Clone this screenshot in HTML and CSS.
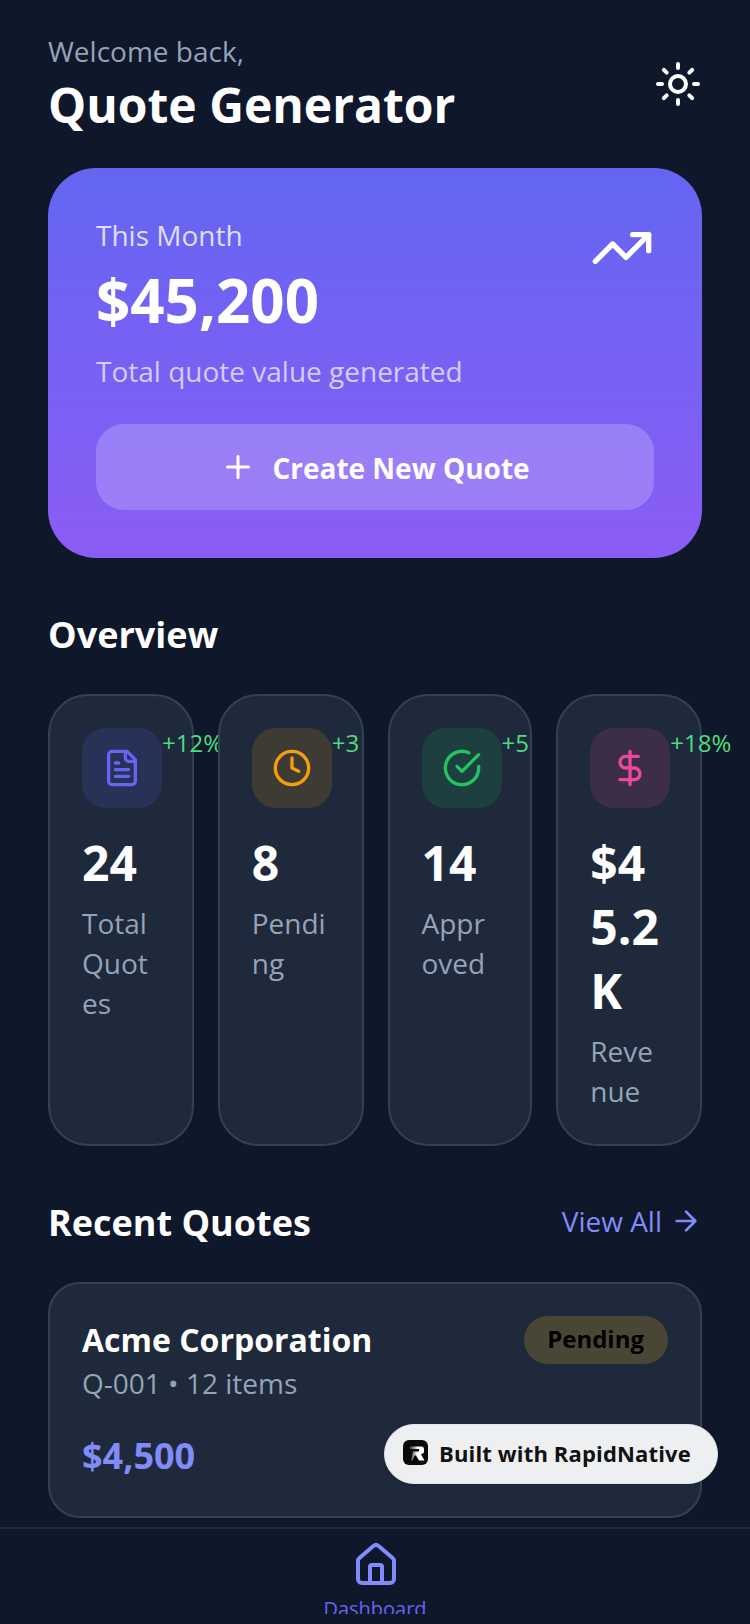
FILE: index.html
```html
<!DOCTYPE html>
<html lang="en">
<head>
    <meta charset="UTF-8">
    <title>Quote Generator</title>
    <link rel="stylesheet" href="styles.css">
</head>
<body>
    <div class="app">
        <main class="content">
            <header class="header">
                <div>
                    <p class="welcome">Welcome back,</p>
                    <h1 class="app-title">Quote Generator</h1>
                </div>
                <svg class="icon-48" viewBox="0 0 24 24" fill="none" stroke="#fff" stroke-width="2" stroke-linecap="round" stroke-linejoin="round">
                    <circle cx="12" cy="12" r="4"/>
                    <path d="M12 2v2M12 20v2M4.93 4.93l1.41 1.41M17.66 17.66l1.41 1.41M2 12h2M20 12h2M6.34 17.66l-1.41 1.41M19.07 4.93l-1.41 1.41"/>
                </svg>
            </header>

            <section class="hero">
                <div class="hero-top">
                    <div>
                        <p class="hero-label">This Month</p>
                        <p class="hero-value">$45,200</p>
                        <p class="hero-note">Total quote value generated</p>
                    </div>
                    <svg class="icon-64" viewBox="0 0 24 24" fill="none" stroke="#fff" stroke-width="2" stroke-linecap="round" stroke-linejoin="round">
                        <polyline points="22 7 13.5 15.5 8.5 10.5 2 17"/>
                        <polyline points="16 7 22 7 22 13"/>
                    </svg>
                </div>
                <button class="create-button">
                    <svg class="icon-36" viewBox="0 0 24 24" fill="none" stroke="#fff" stroke-width="2" stroke-linecap="round" stroke-linejoin="round">
                        <path d="M5 12h14M12 5v14"/>
                    </svg>
                    <span class="create-text">Create New Quote</span>
                </button>
            </section>

            <h2 class="section-title overview-title">Overview</h2>
            <section class="stats">
                <div class="stat-card">
                    <div class="stat-top">
                        <div class="stat-icon tint-indigo">
                            <svg class="icon-40" viewBox="0 0 24 24" fill="none" stroke="#6366f1" stroke-width="2" stroke-linecap="round" stroke-linejoin="round">
                                <path d="M15 2H6a2 2 0 0 0-2 2v16a2 2 0 0 0 2 2h12a2 2 0 0 0 2-2V7Z"/>
                                <path d="M14 2v4a2 2 0 0 0 2 2h4"/>
                                <path d="M10 9H8M16 13H8M16 17H8"/>
                            </svg>
                        </div>
                        <span class="stat-change">+12%</span>
                    </div>
                    <p class="stat-value">24</p>
                    <p class="stat-label">Total Quotes</p>
                </div>
                <div class="stat-card">
                    <div class="stat-top">
                        <div class="stat-icon tint-amber">
                            <svg class="icon-40" viewBox="0 0 24 24" fill="none" stroke="#f59e0b" stroke-width="2" stroke-linecap="round" stroke-linejoin="round">
                                <circle cx="12" cy="12" r="10"/>
                                <polyline points="12 6 12 12 16 14"/>
                            </svg>
                        </div>
                        <span class="stat-change">+3</span>
                    </div>
                    <p class="stat-value">8</p>
                    <p class="stat-label">Pending</p>
                </div>
                <div class="stat-card">
                    <div class="stat-top">
                        <div class="stat-icon tint-green">
                            <svg class="icon-40" viewBox="0 0 24 24" fill="none" stroke="#22c55e" stroke-width="2" stroke-linecap="round" stroke-linejoin="round">
                                <path d="M22 11.08V12a10 10 0 1 1-5.93-9.14"/>
                                <path d="m9 11 3 3L22 4"/>
                            </svg>
                        </div>
                        <span class="stat-change">+5</span>
                    </div>
                    <p class="stat-value">14</p>
                    <p class="stat-label">Approved</p>
                </div>
                <div class="stat-card">
                    <div class="stat-top">
                        <div class="stat-icon tint-pink">
                            <svg class="icon-40" viewBox="0 0 24 24" fill="none" stroke="#ec4899" stroke-width="2" stroke-linecap="round" stroke-linejoin="round">
                                <path d="M12 2v20"/>
                                <path d="M17 5H9.5a3.5 3.5 0 0 0 0 7h5a3.5 3.5 0 0 1 0 7H6"/>
                            </svg>
                        </div>
                        <span class="stat-change">+18%</span>
                    </div>
                    <p class="stat-value">$45.2K</p>
                    <p class="stat-label">Revenue</p>
                </div>
            </section>

            <div class="section-row">
                <h2 class="section-title">Recent Quotes</h2>
                <a class="view-all">
                    <span>View All</span>
                    <svg class="icon-32" viewBox="0 0 24 24" fill="none" stroke="#818cf8" stroke-width="2" stroke-linecap="round" stroke-linejoin="round">
                        <path d="M5 12h14M12 5l7 7-7 7"/>
                    </svg>
                </a>
            </div>

            <article class="quote-card">
                <div class="quote-top">
                    <div>
                        <p class="quote-name">Acme Corporation</p>
                        <p class="quote-meta">Q-001 • 12 items</p>
                    </div>
                    <span class="quote-status">Pending</span>
                </div>
                <p class="quote-amount">$4,500</p>
            </article>
        </main>

        <nav class="tabbar">
            <svg class="icon-48 tab-icon" viewBox="0 0 24 24" fill="none" stroke="#818cf8" stroke-width="2" stroke-linecap="round" stroke-linejoin="round">
                <path d="M15 21v-8a1 1 0 0 0-1-1h-4a1 1 0 0 0-1 1v8"/>
                <path d="M3 10a2 2 0 0 1 .709-1.528l7-5.999a2 2 0 0 1 2.582 0l7 5.999A2 2 0 0 1 21 10v9a2 2 0 0 1-2 2H5a2 2 0 0 1-2-2z"/>
            </svg>
            <span class="tab-label">Dashboard</span>
        </nav>

        <div class="built-badge">
            <svg class="built-logo" viewBox="0 0 25 25">
                <defs>
                    <linearGradient id="logoFade" x1="0" y1="0" x2="1" y2="0">
                        <stop offset="0.1" stop-color="#555"/>
                        <stop offset="0.5" stop-color="#fff"/>
                    </linearGradient>
                </defs>
                <rect width="25" height="25" rx="6" fill="#0a0a0a"/>
                <path d="M7 6.5h11.5a2.5 2.5 0 0 1 2.5 2.5v3.5l-3 2 3.5 6h-5.5l-3-5h-1.5l-2 5H8l2-9h6v-2.5H7z" fill="url(#logoFade)"/>
            </svg>
            <span>Built with RapidNative</span>
        </div>
    </div>
</body>
</html>
```

FILE: styles.css
```css
* {
    box-sizing: border-box;
}

html, body {
    margin: 0;
    padding: 0;
}

body {
    font-family: "Open Sans", Arial, sans-serif;
    background-color: #0f172a;
    color: #fff;
}

p, h1, h2 {
    margin: 0;
}

svg {
    display: block;
    flex-shrink: 0;
}

.icon-32 { width: 32px; height: 32px; }
.icon-36 { width: 36px; height: 36px; }
.icon-40 { width: 40px; height: 40px; }
.icon-48 { width: 48px; height: 48px; }
.icon-64 { width: 64px; height: 64px; }

.app {
    position: relative;
    width: 750px;
    height: 1624px;
    display: flex;
    flex-direction: column;
    overflow: hidden;
}

.content {
    flex: 1;
    min-height: 0;
    overflow: hidden;
    padding: 33px 48px 0;
}

/* header */
.header {
    display: flex;
    justify-content: space-between;
    align-items: center;
    margin-bottom: 34px;
}

.welcome {
    font-size: 28px;
    line-height: 36px;
    color: #94a3b8;
}

.app-title {
    font-size: 48px;
    line-height: 58px;
    font-weight: 700;
    margin-top: 7px;
}

/* hero card */
.hero {
    padding: 48px;
    border-radius: 48px;
    background: linear-gradient(180deg, #6366f1, #8b5cf6);
}

.hero-top {
    display: flex;
    justify-content: space-between;
    align-items: flex-start;
}

.hero-label {
    font-size: 28px;
    line-height: 38px;
    color: rgba(255, 255, 255, 0.8);
}

.hero-value {
    font-size: 60px;
    line-height: 80px;
    font-weight: 700;
    margin-top: 6px;
}

.hero-note {
    font-size: 28px;
    line-height: 40px;
    color: rgba(255, 255, 255, 0.7);
    margin-top: 11px;
}

.create-button {
    width: 100%;
    height: 86px;
    margin-top: 33px;
    display: flex;
    align-items: center;
    justify-content: center;
    gap: 16px;
    border: none;
    border-radius: 28px;
    background-color: rgba(255, 255, 255, 0.2);
    color: #fff;
    font-family: inherit;
    font-size: 28px;
    font-weight: 700;
}

.create-text {
    padding-top: 2px;
}

/* sections */
.section-title {
    font-size: 36px;
    line-height: 48px;
    font-weight: 700;
}

.overview-title {
    margin-top: 53px;
}

.stats {
    display: grid;
    grid-template-columns: 145.75fr 145.75fr 144.75fr 145.75fr;
    gap: 24px;
    margin-top: 35px;
}

.stat-card {
    min-width: 0;
    padding: 32px 32px 33px;
    border: 2px solid #334155;
    border-radius: 40px;
    background-color: #1e293b;
}

.stat-top {
    display: flex;
    justify-content: space-between;
    align-items: flex-start;
    margin-bottom: 23px;
}

.stat-icon {
    width: 80px;
    height: 80px;
    flex-shrink: 0;
    display: flex;
    align-items: center;
    justify-content: center;
    border-radius: 24px;
}

.tint-indigo { background-color: rgba(99, 102, 241, 0.15); }
.tint-amber { background-color: rgba(245, 158, 11, 0.15); }
.tint-green { background-color: rgba(34, 197, 94, 0.15); }
.tint-pink { background-color: rgba(236, 72, 153, 0.15); }

.stat-change {
    font-size: 24px;
    line-height: 30px;
    color: #4ade80;
}

.stat-value {
    font-size: 48px;
    line-height: 64px;
    font-weight: 700;
    overflow-wrap: anywhere;
    margin-bottom: 8px;
}

.stat-label {
    font-size: 28px;
    line-height: 40px;
    color: #94a3b8;
    overflow-wrap: anywhere;
}

.section-row {
    display: flex;
    justify-content: space-between;
    align-items: center;
    margin-top: 53px;
}

.view-all {
    display: flex;
    align-items: center;
    gap: 8px;
    padding-bottom: 4px;
    font-size: 28px;
    line-height: 40px;
    color: #818cf8;
}

/* quote card */
.quote-card {
    margin-top: 35px;
    padding: 32px 32px 36px;
    border: 2px solid #334155;
    border-radius: 32px;
    background-color: #1e293b;
}

.quote-top {
    display: flex;
    justify-content: space-between;
    align-items: flex-start;
}

.quote-name {
    font-size: 32px;
    line-height: 47px;
    font-weight: 700;
}

.quote-meta {
    font-size: 28px;
    line-height: 40px;
    color: #94a3b8;
}

.quote-status {
    height: 48px;
    padding: 0 24px 4px 23px;
    display: flex;
    align-items: center;
    border-radius: 24px;
    background-color: rgba(251, 191, 36, 0.2);
    color: #000;
    font-size: 24px;
    font-weight: 700;
}

.quote-amount {
    margin-top: 29px;
    font-size: 36px;
    line-height: 48px;
    font-weight: 700;
    color: #818cf8;
}

/* bottom tab */
.tabbar {
    height: 87px;
    margin-bottom: 10px;
    padding-top: 12px;
    flex-shrink: 0;
    display: flex;
    flex-direction: column;
    align-items: center;
    overflow: hidden;
    border-top: 2px solid #1e293b;
}

.tab-icon {
    margin-left: 2px;
}

.tab-label {
    flex-shrink: 0;
    margin-top: 6px;
    font-size: 20px;
    line-height: 28px;
    color: #6366f1;
}

/* floating badge */
.built-badge {
    position: absolute;
    left: 384px;
    top: 1424px;
    width: 334px;
    height: 60px;
    padding: 0 0 3px 18px;
    display: flex;
    align-items: center;
    gap: 11px;
    border-radius: 30px;
    background-color: #eeeff1;
    border: 1px solid #e2e8f0;
    box-shadow: 0 1px 3px rgba(0, 0, 0, 0.15);
    color: #111;
    font-size: 22px;
    font-weight: 700;
    letter-spacing: 0.15px;
}

.built-logo {
    width: 25px;
    height: 25px;
}
```
